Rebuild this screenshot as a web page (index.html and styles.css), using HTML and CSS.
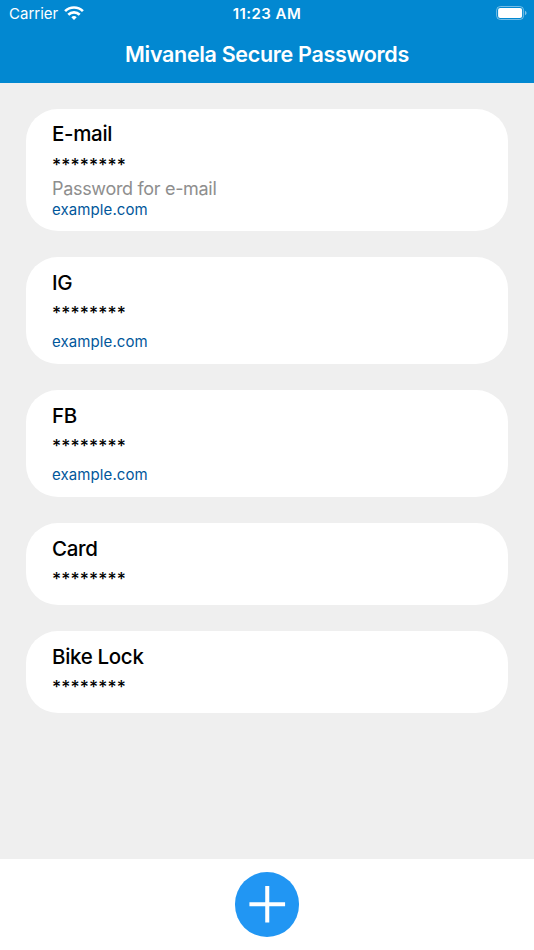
FILE: index.html
```html
<!DOCTYPE html>
<html lang="en">
<head>
<meta charset="utf-8">
<title>Mivanela Secure Passwords</title>
<link rel="stylesheet" href="styles.css">
</head>
<body>
<header class="header">
  <div class="status">
    <div class="carrier"><span>Carrier</span>
      <svg class="wifi" viewBox="0 0 20 14"><g fill="none" stroke="#fff" stroke-width="2.7"><path d="M1.1 5.1a12.8 12.8 0 0 1 17.8 0"/><path d="M4.3 8.7a8.1 8.1 0 0 1 11.4 0"/></g><path fill="#fff" d="M10 14l-2.7-2.7a3.9 3.9 0 0 1 5.4 0z"/></svg>
    </div>
    <time class="clock">11:23 AM</time>
    <svg class="battery" viewBox="0 0 32 14"><rect x=".6" y=".5" width="27" height="13" rx="3.8" fill="none" stroke="#fff" stroke-opacity=".45"/><rect x="2.1" y="2" width="24" height="10" rx="2.1" fill="#fff"/><path d="M29 4.7q1.6.7 1.6 2.3T29 9.3z" fill="#fff" fill-opacity=".5"/></svg>
  </div>
  <h1 class="title">Mivanela Secure Passwords</h1>
</header>
<main class="list">
  <article class="card card-note"><h2>E-mail</h2><p class="mask">********</p><p class="note">Password for e-mail</p><a class="link">example.com</a></article>
  <article class="card card-link"><h2>IG</h2><p class="mask">********</p><a class="link">example.com</a></article>
  <article class="card card-link"><h2>FB</h2><p class="mask">********</p><a class="link">example.com</a></article>
  <article class="card"><h2>Card</h2><p class="mask">********</p></article>
  <article class="card"><h2>Bike Lock</h2><p class="mask">********</p></article>
</main>
<footer class="footer">
  <button class="add" aria-label="Add password"><svg viewBox="0 0 64 64"><path d="M32 13.8v36.2M14.3 32h35.4" stroke="#fff" stroke-width="4"/></svg></button>
</footer>
</body>
</html>
```
FILE: styles.css
```css
* { box-sizing: border-box; margin: 0; padding: 0; }
body { width: 534px; height: 950px; display: flex; flex-direction: column; background: #efefef; font-family: Inter, "Liberation Sans", sans-serif; overflow: hidden; }
.header { height: 83px; background: #0288d1; color: #fff; }
.status { height: 27px; padding: 0 9px; display: grid; grid-template-columns: 1fr auto 1fr; align-items: center; }
.carrier { display: flex; align-items: center; gap: 5.5px; font-size: 15px; letter-spacing: 0; }
.wifi { width: 20px; height: 14px; margin-top: -1px; }
.clock { font-size: 15px; font-weight: 600; letter-spacing: .45px; }
.battery { width: 32px; height: 14px; justify-self: end; margin: -1px -3px 0 0; }
.title { font-size: 21.5px; line-height: 54px; font-weight: 600; text-align: center; letter-spacing: -.32px; }
.list { flex: 1; padding: 25.7px 26px; display: flex; flex-direction: column; gap: 26px; }
.card { height: 82px; padding: 11.7px 26px; border-radius: 32px; background: #fff; }
.card-note { height: 122.5px; }
.card-link { height: 107px; }
.card h2 { font-size: 20.5px; line-height: 27.5px; font-weight: 500; letter-spacing: -.32px; }
.mask { font-size: 17.5px; line-height: 24px; margin-top: 4.7px; font-weight: 500; letter-spacing: .15px; }
.note { font-size: 18px; line-height: 24px; margin-top: .9px; color: #8e8e8e; letter-spacing: -.32px; }
.link { display: block; font-size: 15px; line-height: 18px; color: #01579b; letter-spacing: .1px; }
.card-note .link { margin-top: -.6px; }
.card-link .link { margin-top: 8.1px; }
.footer { height: 91px; background: #fff; display: flex; justify-content: center; padding-top: 13px; }
.add { width: 64.5px; height: 64.5px; border: 0; border-radius: 50%; background: #2196f3; }
.add svg { display: block; width: 64.5px; height: 64.5px; }
```
